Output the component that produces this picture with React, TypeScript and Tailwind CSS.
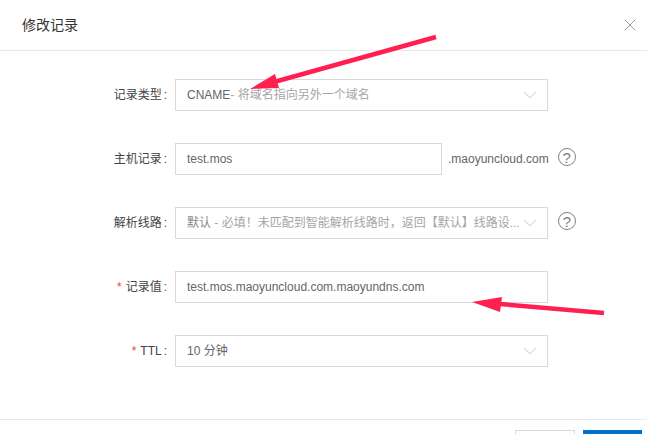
import { ChevronDown, X } from "lucide-react";
import type { ReactNode } from "react";

const Help = () => (
  <span className="mb-1 flex size-[18px] shrink-0 items-center justify-center rounded-full border-[1.5px] border-[#808080] text-[15px] leading-none text-[#808080]">
    ?
  </span>
);

const Row = ({
  label,
  required,
  children,
  after,
}: {
  label: string;
  required?: boolean;
  children: ReactNode;
  after?: ReactNode;
}) => (
  <div className="flex h-8 items-center">
    <label className="w-[167px] shrink-0 text-right text-xs text-[#444]">
      {required && <span className="mr-1 text-[#e54545]">*</span>}
      {label}
      <span className="ml-0.5">:</span>
    </label>
    <div className="ml-2 flex h-8 flex-1 items-center">
      {children}
      {after}
    </div>
  </div>
);

const Box = ({ children, select }: { children: ReactNode; select?: boolean }) => (
  <div className="flex h-8 w-[373px] items-center justify-between border border-[#d9d9d9] pr-[6px] pl-[11px] text-xs text-[#666]">
    <span className="whitespace-nowrap">{children}</span>
    {select && (
      <ChevronDown className="-ml-1 size-[22px] shrink-0 text-[#c4c4c4]" strokeWidth={1} />
    )}
  </div>
);

export default function App() {
  return (
    <div
      className="relative h-[434px] w-[647px] overflow-hidden bg-white"
      style={{ fontFamily: '"Liberation Sans", "Noto Sans CJK SC", sans-serif' }}
    >
      <div className="flex h-[51px] items-center justify-between border-b border-[#e5e8ef] pr-[7px] pl-[22px]">
        <h2 className="text-sm text-[#333]">修改记录</h2>
        <X className="size-5 text-[#888]" strokeWidth={1} />
      </div>

      <div className="flex flex-col gap-8 pt-7">
        <Row label="记录类型">
          <Box select>
            CNAME<span className="text-[#a5a5a5]">- 将域名指向另外一个域名</span>
          </Box>
        </Row>
        <Row
          label="主机记录"
          after={
            <>
              <span className="ml-[6px] text-xs text-[#666]">.maoyuncloud.com</span>
              <span className="ml-[9px] flex items-center">
                <Help />
              </span>
            </>
          }
        >
          <div className="flex h-8 w-[267px] items-center border border-[#d9d9d9] pl-[11px] text-xs text-[#666]">
            test.mos
          </div>
        </Row>
        <Row
          label="解析线路"
          after={
            <span className="ml-[10px] flex items-center">
              <Help />
            </span>
          }
        >
          <Box select>
            <span className="text-[#888]">默认</span>
            <span className="text-[#a5a5a5]"> - 必填！未匹配到智能解析线路时，返回【默认】线路设...</span>
          </Box>
        </Row>
        <Row label="记录值" required>
          <Box>test.mos.maoyuncloud.com.maoyundns.com</Box>
        </Row>
        <Row label="TTL" required>
          <Box select>10 分钟</Box>
        </Row>
      </div>

      <div className="mt-[52px] flex justify-end gap-2 border-t border-[#e8e8e8] pt-[10px] pr-[5px]">
        <button className="h-9 w-[60px] border border-[#d9d9d9] bg-white" />
        <button className="h-9 w-[59px] bg-[#0070cc]" />
      </div>

      {/* annotation arrows */}
      <svg className="absolute inset-0" width="647" height="434" viewBox="0 0 647 434">
        <path d="M436 37 L274 82" stroke="#ff1f50" strokeWidth="4.5" fill="none" />
        <path d="M250 89 L275 74 L279 88 Z" fill="#ff1f50" />
        <path d="M604 313 L500 304" stroke="#ff1f50" strokeWidth="4.5" fill="none" />
        <path d="M472 302 L502 297 L500 312 Z" fill="#ff1f50" />
      </svg>
    </div>
  );
}
